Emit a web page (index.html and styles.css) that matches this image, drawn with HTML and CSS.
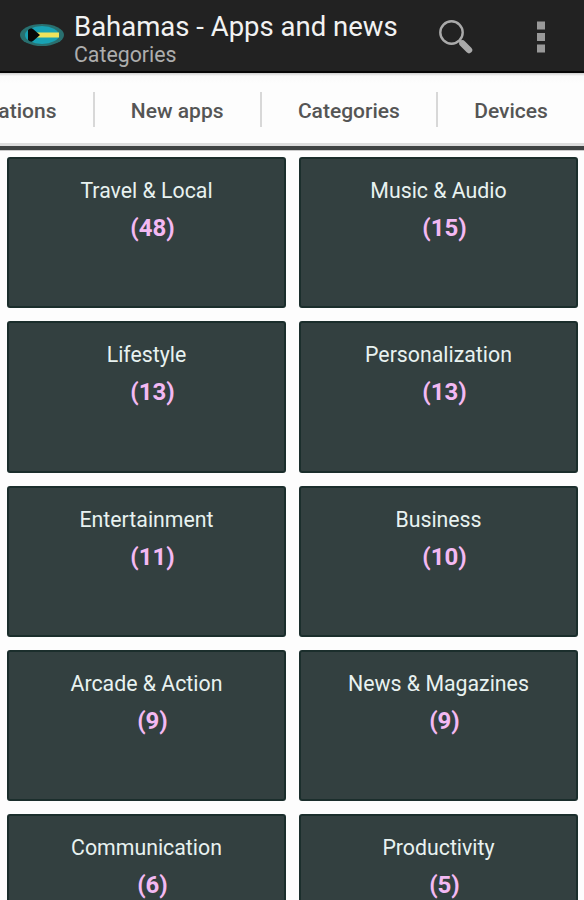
FILE: index.html
```html
<!DOCTYPE html>
<html lang="en">
<head>
    <meta charset="UTF-8">
    <meta name="viewport" content="width=device-width, initial-scale=1.0">
    <title>Bahamas - Apps and news</title>
    <link rel="stylesheet" href="styles.css">
</head>
<body>
    <header class="action-bar">
        <svg class="logo" width="46" height="26" viewBox="0 0 46 26">
            <ellipse cx="23" cy="13" rx="22" ry="11" fill="#297070"/>
            <ellipse cx="23" cy="13" rx="17" ry="9" fill="#18a2b4"/>
            <rect x="14" y="10.5" width="26" height="5" fill="#eee35c"/>
            <path d="M9 8q3-3 5-1l7 6-7 6q-2 2-5-1z" fill="#080808"/>
        </svg>
        <div class="titles">
            <h1>Bahamas - Apps and news</h1>
            <div class="subtitle">Categories</div>
        </div>
        <svg class="search" width="38" height="38" viewBox="0 0 38 38" fill="none">
            <circle cx="13.5" cy="14.5" r="11.2" stroke="#aaa" stroke-width="2.4"/>
            <path d="M21 22l3 3" stroke="#aaa" stroke-width="3"/>
            <path d="M24.5 25.5l6.5 6.5" stroke="#aaa" stroke-width="6.5" stroke-linecap="round"/>
        </svg>
        <svg class="more" width="10" height="34" viewBox="0 0 10 34" fill="#999">
            <rect x="1" y="1.5" width="8" height="8"/>
            <rect x="1" y="13" width="8" height="8"/>
            <rect x="1" y="24.5" width="8" height="8"/>
        </svg>
    </header>

    <nav class="tabs">
        <div class="tab">ations</div>
        <div class="tab">New apps</div>
        <div class="tab">Categories</div>
        <div class="tab">Devices</div>
    </nav>

    <main class="grid">
        <div class="card"><h2>Travel &amp; Local</h2><div class="count">(48)</div></div>
        <div class="card"><h2>Music &amp; Audio</h2><div class="count">(15)</div></div>
        <div class="card"><h2>Lifestyle</h2><div class="count">(13)</div></div>
        <div class="card"><h2>Personalization</h2><div class="count">(13)</div></div>
        <div class="card"><h2>Entertainment</h2><div class="count">(11)</div></div>
        <div class="card"><h2>Business</h2><div class="count">(10)</div></div>
        <div class="card"><h2>Arcade &amp; Action</h2><div class="count">(9)</div></div>
        <div class="card"><h2>News &amp; Magazines</h2><div class="count">(9)</div></div>
        <div class="card"><h2>Communication</h2><div class="count">(6)</div></div>
        <div class="card"><h2>Productivity</h2><div class="count">(5)</div></div>
    </main>
</body>
</html>
```
FILE: styles.css
```css
* {
    box-sizing: border-box;
}
body {
    margin: 0;
    height: 900px;
    overflow: hidden;
    background-color: #fdfdfd;
    font-family: Roboto, sans-serif;
}
h1, h2 {
    margin: 0;
    font-weight: 400;
}
.action-bar {
    display: flex;
    align-items: flex-start;
    height: 73px;
    padding-left: 19px;
    background-color: #222;
    border-bottom: 2px solid #050505;
}
.logo {
    margin-top: 22px;
}
.titles {
    width: 364px;
    padding: 10px 0 0 9px;
}
h1 {
    font-size: 27.5px;
    line-height: 33px;
    color: #f2f2f2;
    white-space: nowrap;
}
.subtitle {
    font-size: 21.3px;
    line-height: 24px;
    color: #adadad;
}
.search {
    margin: 18px 0 0 9px;
}
.more {
    margin: 20px 0 0 60px;
}
.tabs {
    display: flex;
    justify-content: flex-end;
    align-items: center;
    height: 77px;
    background: linear-gradient(#ccc, #fafafa 3px, #fdfdfd 10px);
    border-bottom: 4px solid #3f4343;
    box-shadow: inset 0 -3px #ddd, 0 1px #ccc;
}
.tab {
    flex: none;
    padding: 4px 36.2px 0;
    font-size: 21px;
    font-weight: 500;
    line-height: 31px;
    color: #555;
}
.tab + .tab {
    border-left: 2px solid #d8d8d8;
}
.grid {
    display: grid;
    grid-template-columns: 279px 279px;
    grid-auto-rows: 151.3px;
    gap: 13px;
    height: 750px;
    padding: 7px 7px 0;
    overflow: hidden;
}
.card {
    padding-top: 18px;
    text-align: center;
    background-color: #334040;
    border: 2px solid #1b2e2c;
    border-radius: 3px;
}
h2 {
    font-size: 21.3px;
    line-height: 28px;
    color: #e8f2f0;
}
.count {
    padding-left: 12px;
    font-size: 24px;
    font-weight: 700;
    line-height: 46px;
    color: #f3b9f3;
}
```
